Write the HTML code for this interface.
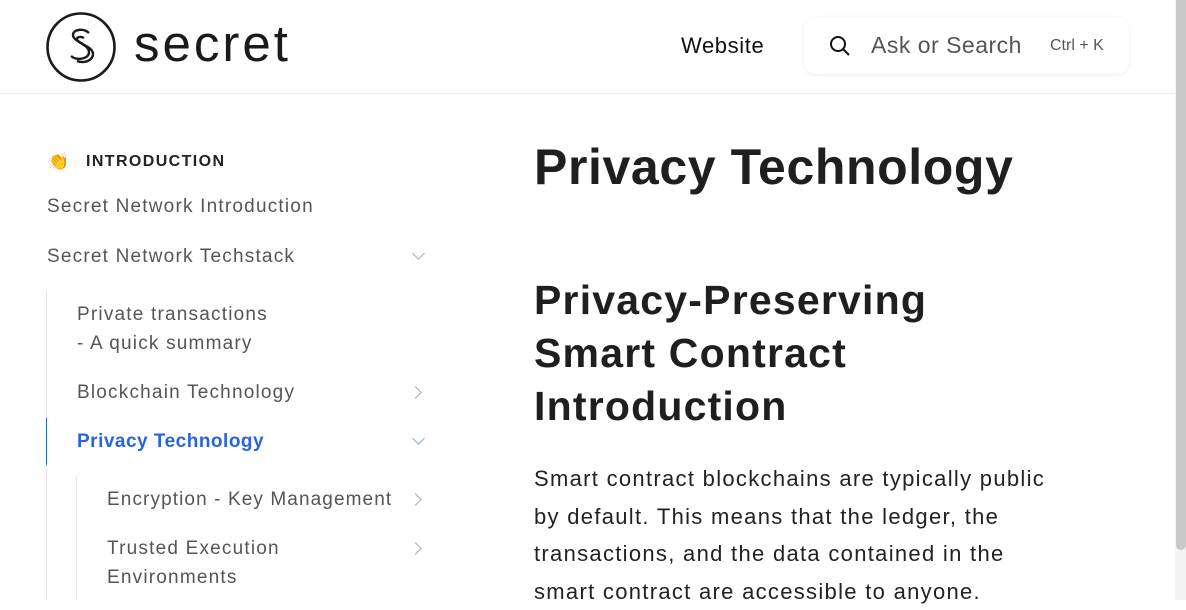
<!DOCTYPE html>
<html><head><meta charset="utf-8"><style>
*{margin:0;padding:0;box-sizing:border-box}
body{width:1186px;height:600px;overflow:hidden;background:#fff;font-family:"Liberation Sans",sans-serif;color:#1f1f1f;position:relative}
.a{position:absolute;white-space:nowrap}
.nav{color:#555;font-size:19px;letter-spacing:1.2px}
.chev{position:absolute;width:9px;height:9px;border-right:1.5px solid #aaa;border-bottom:1.5px solid #aaa}
</style></head><body>
<div class="a" style="left:0;top:93px;width:1175px;height:1px;background:#ececec"></div>
<svg class="a" style="left:45px;top:11px" width="72" height="72" viewBox="0 0 72 72"><circle cx="36" cy="36" r="33.5" fill="none" stroke="#1a1a1a" stroke-width="2.6"/>
<path d="M44 22c-5-5-16-4-16 2 0 7 17 9 16 18-1 6-12 8-18 3" fill="none" stroke="#1a1a1a" stroke-width="2.4"/>
<path d="M39 27c-3-2-7-1-7 1 0 5 16 7 16 15 0 6-8 10-16 7" fill="none" stroke="#1a1a1a" stroke-width="2.4"/></svg>
<div class="a" style="left:134px;top:14px;font-size:51px;color:#1a1a1a;letter-spacing:3px">secret</div>
<div class="a" style="left:681px;top:33px;font-size:22px;color:#111;letter-spacing:0.6px">Website</div>
<div class="a" style="left:804px;top:17px;width:325px;height:57px;border-radius:12px;box-shadow:0 1px 4px rgba(0,0,0,0.08)"></div>
<svg class="a" style="left:828px;top:34px" width="24" height="24" viewBox="0 0 24 24"><circle cx="10" cy="10" r="7" fill="none" stroke="#111" stroke-width="2"/><path d="M15 15l6 6" stroke="#111" stroke-width="2"/></svg>
<div class="a" style="left:871px;top:32px;font-size:23px;color:#555;letter-spacing:0.5px">Ask or Search</div>
<div class="a" style="left:1050px;top:37px;font-size:16px;color:#555">Ctrl + K</div>
<div class="a" style="left:1175px;top:0;width:11px;height:600px;background:#f3f3f3"></div>
<div class="a" style="left:1176px;top:0;width:10px;height:550px;background:#c8c8c8;border-radius:0 0 5px 5px"></div>

<div class="a" style="left:48px;top:152px;font-size:17px">👏</div>
<div class="a" style="left:86px;top:153px;font-size:16px;font-weight:bold;letter-spacing:1.4px;color:#222">INTRODUCTION</div>
<div class="a nav" style="left:47px;top:196px">Secret Network Introduction</div>
<div class="a nav" style="left:47px;top:246px">Secret Network Techstack</div>
<div class="chev" style="left:414px;top:249px;transform:rotate(45deg)"></div>
<div class="a" style="left:46px;top:291px;width:1px;height:309px;background:#e4e4e4"></div>
<div class="a nav" style="left:77px;top:304px">Private transactions</div>
<div class="a nav" style="left:77px;top:333px">- A quick summary</div>
<div class="a nav" style="left:77px;top:382px">Blockchain Technology</div>
<div class="chev" style="left:411px;top:388px;transform:rotate(-45deg)"></div>
<div class="a" style="left:46px;top:418px;width:1px;height:47px;background:#2a64dc"></div>
<div class="a" style="left:77px;top:431px;font-size:19px;font-weight:bold;color:#2a64dc;letter-spacing:0.5px">Privacy Technology</div>
<div class="chev" style="left:414px;top:434px;transform:rotate(45deg);border-color:#8aa9e8"></div>
<div class="a" style="left:76px;top:476px;width:1px;height:124px;background:#e4e4e4"></div>
<div class="a nav" style="left:107px;top:489px;letter-spacing:1.1px">Encryption - Key Management</div>
<div class="chev" style="left:411px;top:495px;transform:rotate(-45deg)"></div>
<div class="a nav" style="left:107px;top:538px">Trusted Execution</div>
<div class="a nav" style="left:107px;top:567px">Environments</div>
<div class="chev" style="left:411px;top:544px;transform:rotate(-45deg)"></div>

<div class="a" style="left:534px;top:138px;font-size:50px;font-weight:bold;color:#1f1f1f;letter-spacing:0.6px">Privacy Technology</div>
<div class="a" style="left:534px;top:274px;font-size:41px;font-weight:bold;line-height:53px;color:#1f1f1f;letter-spacing:1.2px">Privacy-Preserving<br>Smart Contract<br>Introduction</div>
<div class="a" style="left:534px;top:460px;font-size:22px;line-height:37.5px;color:#222;letter-spacing:1.3px">Smart contract blockchains are typically public<br>by default. This means that the ledger, the<br>transactions, and the data contained in the<br>smart contract are accessible to anyone.</div>
</body></html>
